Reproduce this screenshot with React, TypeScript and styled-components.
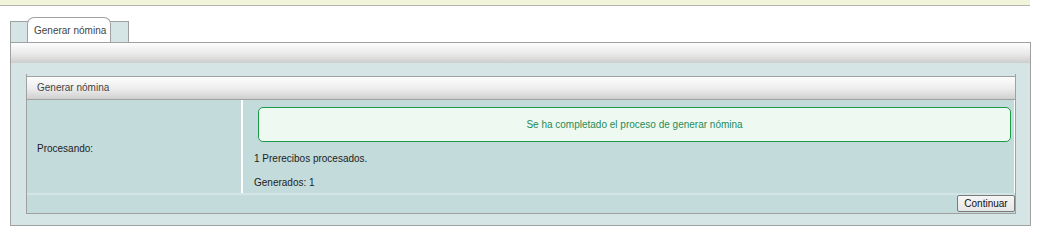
import React from 'react';
import styled, { createGlobalStyle } from 'styled-components';

const GlobalStyle = createGlobalStyle`
  body {
    margin: 0;
    background: #fff;
    font-family: "Liberation Sans", Arial, sans-serif;
    font-size: 10px;
    color: #222;
  }
`;

const TopBar = styled.div`
  width: 1030px;
  height: 5px;
  background: #f2f5dc;
  border-bottom: 1px solid #b4b4b4;
`;

const Container = styled.div`
  width: 1021px;
  margin: 11px 0 0 10px;
`;

const TabRow = styled.div`
  height: 25px;
  display: flex;
  align-items: flex-end;
`;

const TabStrip = styled.div`
  box-sizing: border-box;
  width: 119px;
  height: 21px;
  padding-left: 16px;
  background: #d5e5e5;
  border: 1px solid #a0a0a0;
  border-bottom: 0;
  display: flex;
  align-items: flex-end;
`;

const Tab = styled.div`
  box-sizing: border-box;
  width: 84px;
  height: 25px;
  padding: 0 0 0 6px;
  background: #fff;
  border: 1px solid #a0a0a0;
  border-bottom: 0;
  border-radius: 7px 7px 0 0;
  line-height: 25px;
  color: #444;
  white-space: nowrap;
`;

const HeaderBar = styled.div`
  height: 20px;
  border: 1px solid #a0a0a0;
  border-bottom: 0;
  background: linear-gradient(#fdfdfd, #e9e9e9 55%, #cdcdcd);
`;

const Panel = styled.div`
  padding: 11px 14px 11px 15px;
  background: #d5e5e5;
  border: 1px solid #a0a0a0;
  border-top: 0;
`;

const Box = styled.div`
  padding-top: 2px;
  border: 1px solid #a0a0a0;
  border-top: 0;
`;

const BoxHeader = styled.div`
  height: 22px;
  line-height: 22px;
  padding-left: 10px;
  color: #444;
  border-top: 1px solid #a0a0a0;
  border-bottom: 1px solid #a0a0a0;
  background: linear-gradient(#fdfdfd, #ececec 55%, #cfcfcf);
`;

const BodyRow = styled.div`
  display: flex;
  height: 93px;
  background: #c3dbdb;
  border-bottom: 2px solid #d5e5e5;
`;

const LabelCell = styled.div`
  width: 216px;
  padding: 4px 0 0 10px;
  box-sizing: border-box;
  border-right: 2px solid #fff;
  display: flex;
  align-items: center;
`;

const ValueCell = styled.div`
  flex: 1;
  border-right: 1px solid #fff;
  padding-top: 7px;
`;

const Message = styled.div`
  box-sizing: border-box;
  height: 35px;
  margin: 0 3px 0 15px;
  border: 1px solid #1a9a48;
  border-radius: 5px;
  background: #eefaf1;
  color: #1f8a5a;
  display: flex;
  align-items: center;
  justify-content: center;
`;

const Line = styled.p<{ $top: number }>`
  margin: ${(p) => p.$top}px 0 0 11px;
  line-height: 12px;
`;

const Footer = styled.div`
  height: 18px;
  background: #c3dbdb;
  display: flex;
  justify-content: flex-end;
  align-items: flex-start;
`;

const Button = styled.button`
  box-sizing: border-box;
  width: 58px;
  height: 17px;
  padding: 0;
  font-family: "Liberation Sans", Arial, sans-serif;
  font-size: 10px;
  color: #111;
  background: linear-gradient(#f6f6f6, #e6e6e6);
  border: 1px solid #7a7a7a;
  border-radius: 2px;
`;

export default function App() {
  return (
    <>
      <GlobalStyle />
      <TopBar />
      <Container>
        <TabRow>
          <TabStrip>
            <Tab>Generar nómina</Tab>
          </TabStrip>
        </TabRow>
        <HeaderBar />
        <Panel>
          <Box>
            <BoxHeader>Generar nómina</BoxHeader>
            <BodyRow>
              <LabelCell>Procesando:</LabelCell>
              <ValueCell>
                <Message>Se ha completado el proceso de generar nómina</Message>
                <Line $top={11}>1 Prerecibos procesados.</Line>
                <Line $top={12}>Generados: 1</Line>
              </ValueCell>
            </BodyRow>
            <Footer>
              <Button>Continuar</Button>
            </Footer>
          </Box>
        </Panel>
      </Container>
    </>
  );
}
